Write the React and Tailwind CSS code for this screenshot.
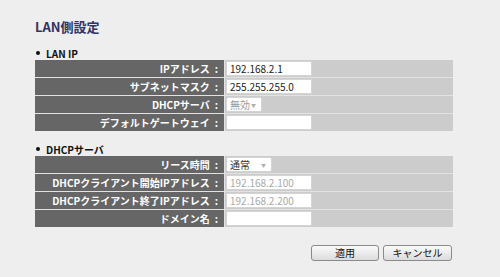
import React from "react";

const font = {
  fontFamily: '"Noto Sans CJK JP", "Liberation Sans", sans-serif',
};

function TextBox({ value, disabled, w = "w-[86px]" }) {
  return (
    <div
      className={`
      ${w}
      h-[15px]
      bg-white
      border
      border-[#d4d4d4]
      px-[3px]
      flex
      items-center
      text-[10px]
      leading-none
      ${disabled ? "text-[#a8a8a8]" : "text-[#222]"}
      `}
    >
      {value}
    </div>
  );
}

function SelectBox({ value, w, muted }) {
  return (
    <div
      className={`
      ${w}
      h-[15px]
      bg-white
      border
      border-[#d4d4d4]
      rounded-[2px]
      pl-[3px]
      pr-[5px]
      flex
      items-center
      justify-between
      text-[10px]
      leading-none
      ${muted ? "text-[#9a9a9a]" : "text-[#333]"}
      `}
    >
      <span>{value}</span>
      <span className="text-[5px] text-[#b0b0b0]">▼</span>
    </div>
  );
}

function Section({ title, rows }) {
  return (
    <div>
      <div
        className="
        flex
        items-center
        h-[12px]
        text-[10px]
        font-bold
        text-[#111]
        "
      >
        <span className="w-[4px] h-[4px] rounded-full bg-[#111] ml-[1px] mr-[6px]" />
        {title}
      </div>

      <div
        className="
        mt-[1px]
        w-[418px]
        grid
        grid-cols-[189px_1fr]
        gap-px
        bg-[#e2e2e2]
        "
      >
        {rows.map((row, i) => (
          <React.Fragment key={i}>
            <div
              className="
              h-[17px]
              bg-[#666666]
              text-white
              font-bold
              text-[10px]
              flex
              items-center
              justify-end
              pr-[6px]
              "
            >
              {row.label}
              <span className="ml-[5px]">:</span>
            </div>
            <div
              className="
              h-[17px]
              bg-[#cccccc]
              flex
              items-center
              pl-[1px]
              "
            >
              {row.field}
            </div>
          </React.Fragment>
        ))}
      </div>
    </div>
  );
}

export default function App() {
  const lanRows = [
    { label: "IPアドレス", field: <TextBox value="192.168.2.1" /> },
    { label: "サブネットマスク", field: <TextBox value="255.255.255.0" /> },
    { label: "DHCPサーバ", field: <SelectBox value="無効" w="w-[36px]" muted /> },
    { label: "デフォルトゲートウェイ", field: <TextBox value="" /> },
  ];

  const dhcpRows = [
    { label: "リース時間", field: <SelectBox value="通常" w="w-[46px]" /> },
    {
      label: "DHCPクライアント開始IPアドレス",
      field: <TextBox value="192.168.2.100" disabled />,
    },
    {
      label: "DHCPクライアント終了IPアドレス",
      field: <TextBox value="192.168.2.200" disabled />,
    },
    { label: "ドメイン名", field: <TextBox value="" /> },
  ];

  return (
    <div
      style={font}
      className="
      w-[500px]
      h-[277px]
      bg-[#eeeeee]
      pl-[35px]
      pt-[19px]
      overflow-hidden
      "
    >
      <h1
        className="
        text-[13px]
        font-bold
        text-[#333366]
        leading-[16px]
        "
      >
        LAN側設定
      </h1>

      <div className="mt-[12px]">
        <Section title="LAN IP" rows={lanRows} />
      </div>

      <div className="mt-[12px]">
        <Section title="DHCPサーバ" rows={dhcpRows} />
      </div>

      <div
        className="
        w-[418px]
        flex
        justify-end
        gap-[4px]
        mt-[18px]
        pr-[1px]
        "
      >
        <button
          className="
          w-[68px]
          h-[16px]
          rounded-[3px]
          border
          border-[#8a8a8a]
          bg-gradient-to-b
          from-[#fafafa]
          to-[#dcdcdc]
          text-[10px]
          leading-none
          text-[#111]
          "
        >
          適用
        </button>
        <button
          className="
          w-[69px]
          h-[16px]
          rounded-[3px]
          border
          border-[#8a8a8a]
          bg-gradient-to-b
          from-[#fafafa]
          to-[#dcdcdc]
          text-[10px]
          leading-none
          text-[#111]
          "
        >
          キャンセル
        </button>
      </div>
    </div>
  );
}
